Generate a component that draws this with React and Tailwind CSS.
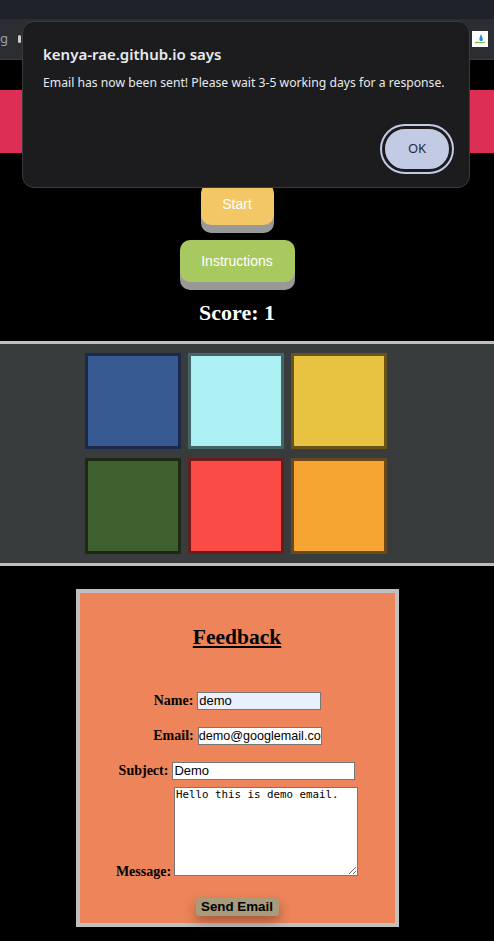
import React from 'react'

const squares = [
  { bg: 'bg-[#365a91]', border: 'border-[#1b2a4a]' },
  { bg: 'bg-[#adf0f4]', border: 'border-[#436464]' },
  { bg: 'bg-[#e8c341]', border: 'border-[#6a5418]' },
  { bg: 'bg-[#3e5f2e]', border: 'border-[#1c2a14]' },
  { bg: 'bg-[#fa4b45]', border: 'border-[#6a1c1a]' },
  { bg: 'bg-[#f7a532]', border: 'border-[#6a4a1a]' },
]

function AlertDialog() {
  return (
    <div className="absolute left-[22px] top-[21px] w-[448px] h-[167px] rounded-[12px] bg-[#1c1c1e] border border-[#3b3b3e] px-[20px] pt-[21px] font-['Noto_Sans',sans-serif]">
      <div className="text-[15px] font-semibold text-[#e8eaed] leading-[22px]">kenya-rae.github.io says</div>
      <div className="mt-[9px] text-[12.2px] text-[#e8eaed] leading-[18px] whitespace-nowrap">
        Email has now been sent! Please wait 3-5 working days for a response.
      </div>
      <div className="flex justify-end mt-[34px]">
        <button className="w-[70px] h-[46px] rounded-full bg-[#c2cbe3] border-[3px] border-[#1c1c1e] outline-[2px] outline outline-[#c2cbe3] text-[13px] text-[#1f2a44] mr-[-3px]">
          OK
        </button>
      </div>
    </div>
  )
}

function Chrome() {
  return (
    <div>
      <div className="h-[19px] bg-[#202229]" />
      <div className="h-[41px] bg-[#2b2d33] border-b border-[#3a3c42] flex items-center justify-between pl-0 pr-[6px]">
        <div className="flex items-center gap-[10px] text-[13px] text-[#9aa0a6] font-['Noto_Sans',sans-serif]">
          <span>g</span>
          <span className="w-[3px] h-[8px] bg-[#ccc] rounded-sm" />
        </div>
        <div className="w-[16px] h-[16px] bg-white flex items-center justify-center">
          <svg width="12" height="12" viewBox="0 0 12 12">
            <path d="M7 1 C6 4 5 5 5.5 7 C6 8.5 8.5 8.5 8.8 7 C9 5 8 4 7 1Z" fill="#1e88e5" />
            <path d="M1 10 C4 8 6 11 11 9" stroke="#7cb342" strokeWidth="1.2" fill="none" />
          </svg>
        </div>
      </div>
    </div>
  )
}

export default function App() {
  return (
    <div className="relative w-[494px] h-[941px] bg-black overflow-hidden">
      <Chrome />

      <div className="w-[474px]">
        <div className="h-[30px]" />
        <div className="h-[63px] bg-[#dd2e55] w-[494px]" />

        <div className="flex flex-col items-center pt-[30px]">
          <button className="w-[73px] h-[42px] rounded-[10px] bg-[#f3c766] shadow-[0_8px_0_#999999] text-white text-[14px] font-['Liberation_Sans',sans-serif]">
            Start
          </button>
          <button className="mt-[15px] w-[115px] h-[42px] rounded-[10px] bg-[#a8c95f] shadow-[0_8px_0_#999999] text-white text-[14px] font-['Liberation_Sans',sans-serif]">
            Instructions
          </button>
          <h2 className="mt-[18px] text-white font-bold text-[22px] leading-[26px] font-['Liberation_Serif',serif]">Score: 1</h2>
        </div>
      </div>

      <div className="mt-[15px] border-y-[3px] border-[#c0c0c0] bg-[#383c3d] h-[225px]">
        <div className="w-[474px] flex justify-center pt-[9px]">
          <div className="grid grid-cols-3 gap-x-[7px] gap-y-[9px] ml-[-2px]">
            {squares.map((s, i) => (
              <div key={i} className={`w-[96px] h-[96px] border-[3px] ${s.bg} ${s.border}`} />
            ))}
          </div>
        </div>
      </div>

      <div className="w-[474px] flex justify-center pt-[23px]">
        <div className="w-[323px] h-[338px] border-[4px] border-[#c0c0c0] bg-[#ee845a] font-['Liberation_Serif',serif] text-black">
          <h1 className="mt-[31px] text-center text-[21.5px] font-bold underline leading-[26px]">Feedback</h1>

          <div className="mt-[42px] h-[18px] flex items-center justify-center gap-[4px] text-[14px] leading-[18px] font-bold">
            <span className="ml-[1px]">Name:</span>
            <input readOnly value="demo" className="w-[124px] h-[18px] bg-[#e8f0fe] border border-[#767676] px-[1px] text-[13px] font-['Liberation_Sans',sans-serif] font-normal" />
          </div>
          <div className="mt-[17px] h-[18px] flex items-center justify-center gap-[4px] text-[14px] leading-[18px] font-bold">
            <span className="ml-[1px]">Email:</span>
            <input readOnly value="demo@googlemail.com" className="w-[124px] h-[18px] bg-white border border-[#767676] px-0 text-[12.6px] font-['Liberation_Sans',sans-serif] font-normal" />
          </div>
          <div className="mt-[17px] h-[18px] flex items-center justify-center gap-[4px] text-[14px] leading-[18px] font-bold">
            <span>Subject:</span>
            <input readOnly value="Demo" className="w-[183px] h-[18px] bg-white border border-[#767676] px-[1px] text-[13px] font-['Liberation_Sans',sans-serif] font-normal" />
          </div>
          <div className="mt-[7px] flex items-end justify-center gap-[3px] text-[14px] font-bold">
            <span className="leading-[16px] mb-[-4px]">Message:</span>
            <textarea readOnly value="Hello this is demo email." className="w-[184px] h-[89px] bg-white border border-[#767676] px-[1px] py-0 text-[10.8px] leading-[14px] font-['DejaVu_Sans_Mono',monospace] font-normal resize-y block" />
          </div>
          <div className="mt-[22px] flex justify-center">
            <button className="w-[83px] h-[18px] rounded-[3px] bg-[#a89a7a] text-[13.33px] leading-[18px] font-bold font-['Liberation_Sans',sans-serif] shadow-[0_6px_12px_rgba(80,40,20,0.45)]">
              Send Email
            </button>
          </div>
        </div>
      </div>

      <AlertDialog />
    </div>
  )
}
